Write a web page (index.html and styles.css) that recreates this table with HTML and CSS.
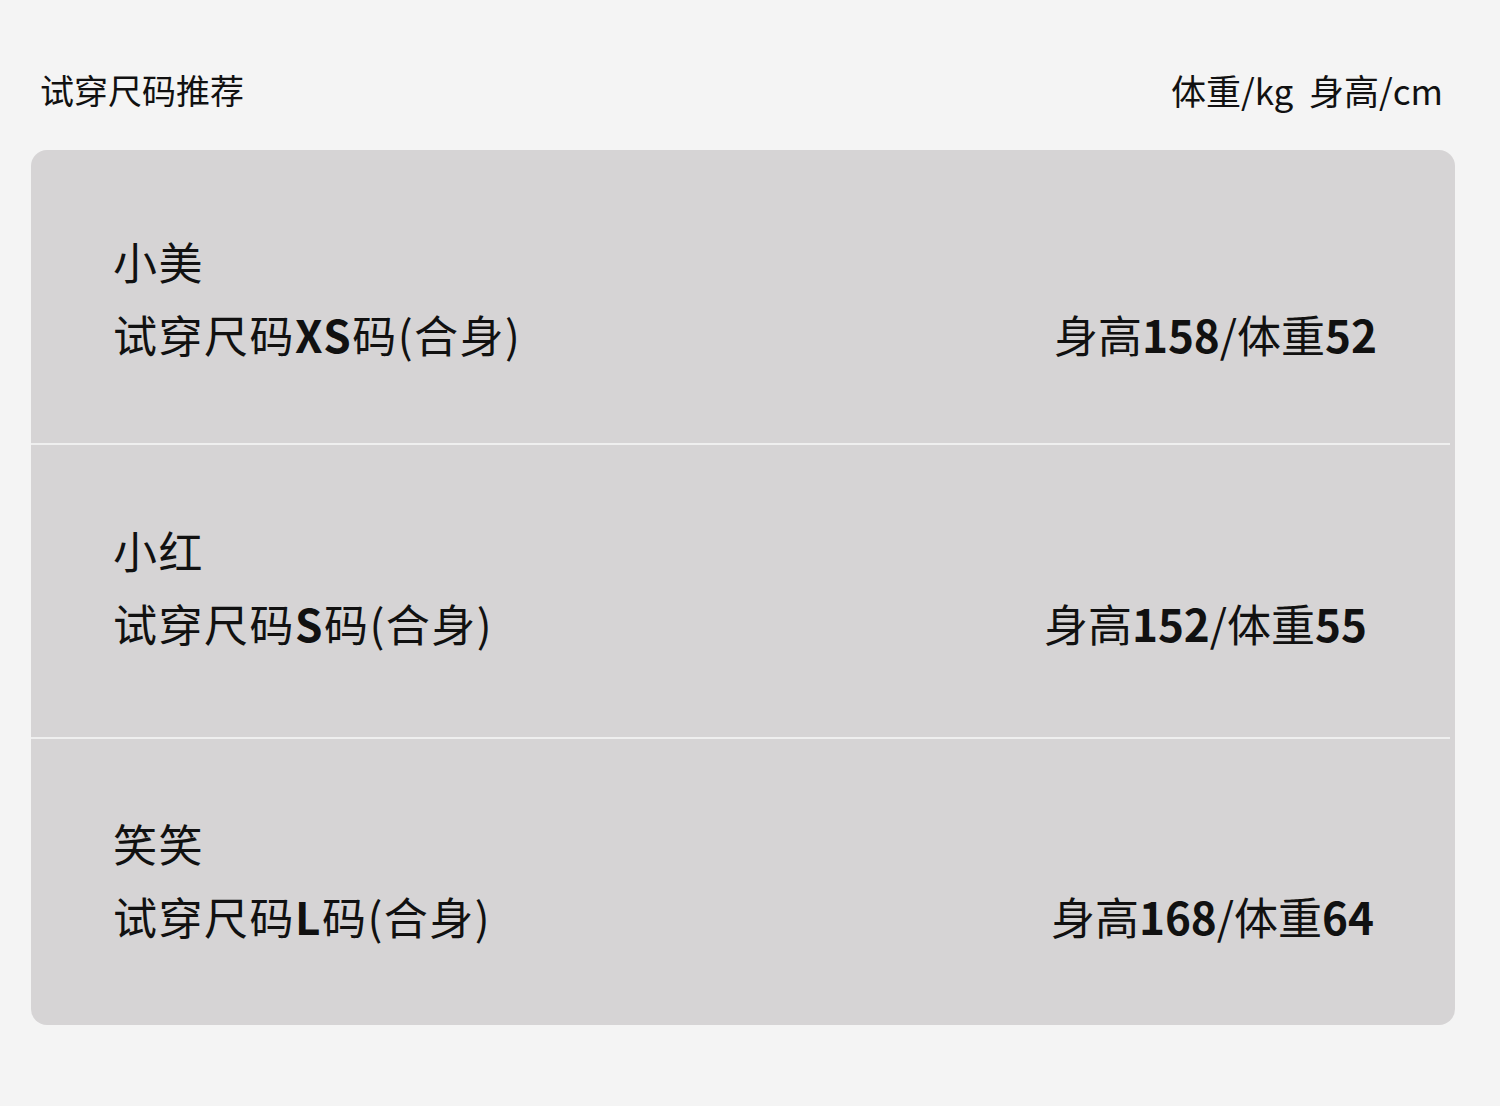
FILE: index.html
```html
<!DOCTYPE html>
<html lang="zh-CN">
<head>
<meta charset="utf-8">
<title>试穿尺码推荐</title>
<link rel="stylesheet" href="styles.css">
</head>
<body>
<div class="page">
  <header class="head">
    <div class="head-title">试穿尺码推荐</div>
    <div class="head-units">体重/kg&nbsp;&nbsp;身高/cm</div>
  </header>
  <section class="card">
    <div class="row row-1">
      <div class="info">
        <div class="name">小美</div>
        <div class="size">试穿尺码<b>XS</b>码(合身)</div>
      </div>
      <div class="body-data">身高<b>158</b>/体重<b>52</b></div>
    </div>
    <div class="sep"></div>
    <div class="row row-2">
      <div class="info">
        <div class="name">小红</div>
        <div class="size">试穿尺码<b>S</b>码(合身)</div>
      </div>
      <div class="body-data">身高<b>152</b>/体重<b>55</b></div>
    </div>
    <div class="sep"></div>
    <div class="row row-3">
      <div class="info">
        <div class="name">笑笑</div>
        <div class="size">试穿尺码<b>L</b>码(合身)</div>
      </div>
      <div class="body-data">身高<b>168</b>/体重<b>64</b></div>
    </div>
  </section>
</div>
</body>
</html>
```
FILE: styles.css
```css
html, body {
  margin: 0;
  padding: 0;
  background: #f4f4f4;
}
body {
  font-family: "Noto Sans CJK SC", "Noto Sans", sans-serif;
  color: #111;
}
.page {
  padding: 68px 45px 0 31px;
}
.head {
  display: flex;
  justify-content: space-between;
  align-items: center;
  padding-left: 9px;
  height: 44px;
  font-size: 34px;
  line-height: 44px;
}
.head-units {
  font-size: 35px;
  margin-right: 12px;
}
.card {
  margin-top: 38px;
  width: 1424px;
  background: #d6d4d5;
  border-radius: 16px;
  overflow: hidden;
}
.row {
  display: flex;
  justify-content: space-between;
  align-items: flex-end;
  padding-left: 82px;
}
.row-1 { padding-top: 75px; padding-bottom: 72px; }
.row-2 { padding-top: 69px; padding-bottom: 77px; }
.row-3 { padding-top: 68px; padding-bottom: 72px; }
.info {
  font-size: 44px;
  line-height: 73px;
  letter-spacing: 1.5px;
}
.name, .size {
  white-space: nowrap;
}
.body-data {
  font-size: 44px;
  line-height: 73px;
  white-space: nowrap;
}
.row-1 .body-data { margin-right: 78px; }
.row-2 .body-data { margin-right: 88px; }
.row-3 .body-data { margin-right: 81px; }
.row-3 .body-data { padding-left: 0; }
b {
  font-weight: 700;
}
.sep {
  height: 2px;
  margin-right: 5px;
  background: #efefef;
}
```
